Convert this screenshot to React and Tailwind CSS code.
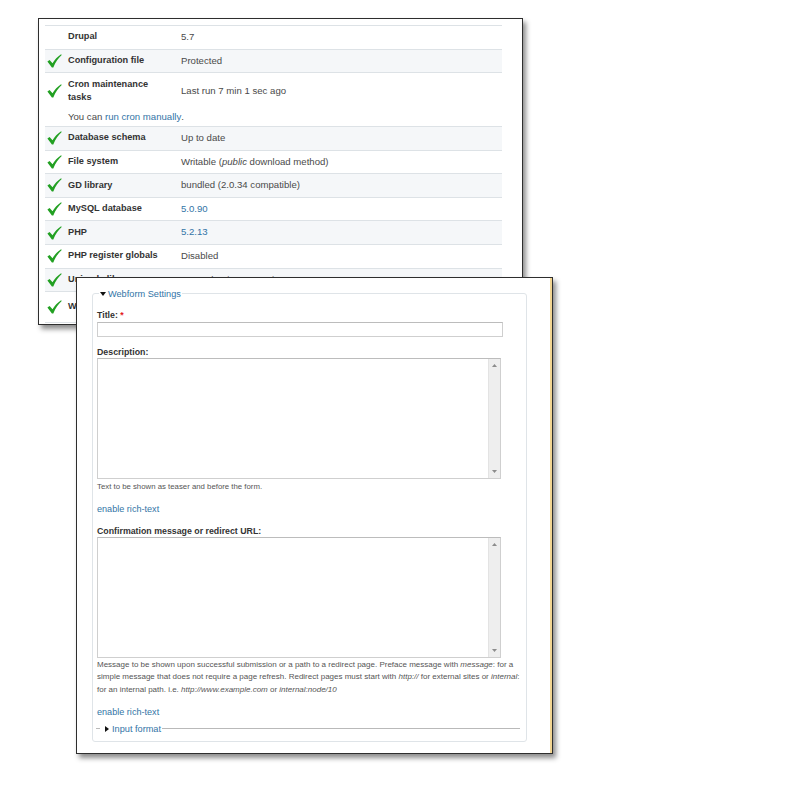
import React from "react";

const LINK = "text-[#3274a6]";

function Check() {
  return (
    <svg width="15" height="14" viewBox="0 0 15 14" className="block">
      <path
        d="M0.4 7.6 L2.6 5.9 L5.5 9.3 C7.6 5.8 10.5 2.6 14.1 0.3 L14.7 1 C11.4 4 8.6 7.9 6.3 13.4 L4.9 13.5 Z"
        fill="#22a022"
      />
    </svg>
  );
}

function Row({ label, children, alt, check = true, height }) {
  return (
    <div
      className={`flex items-center border-b border-[#dde2e6] ${height} ${
        alt ? "bg-[#f5f7f9]" : "bg-white"
      }`}
    >
      <div className="w-[23px] pl-[2px]">{check && <Check />}</div>
      <div className="w-[113px] text-[9.2px] font-bold text-[#333]">{label}</div>
      <div className="text-[9.6px] text-[#4a4a4a] whitespace-nowrap">{children}</div>
    </div>
  );
}

function StatusPanel() {
  return (
    <div className="absolute left-[38px] top-[18px] w-[485px] h-[307px] bg-white border border-[#2e2e2e] shadow-[3px_4px_5px_rgba(0,0,0,0.45)] pl-[6px] pt-[6px] pr-[20px] overflow-hidden">
      <div className="border-t border-[#dde2e6]">
        <Row label="Drupal" check={false} height="h-[23.5px]">5.7</Row>
        <Row label="Configuration file" alt height="h-[23.5px]">Protected</Row>

        {/* cron row carries an extra hint line under it */}
        <div className="h-[54px] border-b border-[#dde2e6] bg-white flex flex-col">
          <div className="h-[36px] flex items-center">
            <div className="w-[23px] pl-[2px]"><Check /></div>
            <div className="w-[113px] text-[9.2px] font-bold text-[#333] leading-[13.3px]">
              Cron maintenance
              <br />
              tasks
            </div>
            <div className="text-[9.6px] text-[#4a4a4a]">Last run 7 min 1 sec ago</div>
          </div>
          <div className="h-[17px] flex items-center pl-[23px] text-[9.6px] text-[#4a4a4a]">
            You can&nbsp;<span className={LINK}>run cron manually</span>.
          </div>
        </div>

        <Row label="Database schema" alt height="h-[23.6px]">Up to date</Row>
        <Row label="File system" height="h-[23.6px]">
          Writable (<em>public</em> download method)
        </Row>
        <Row label="GD library" alt height="h-[23.6px]">bundled (2.0.34 compatible)</Row>
        <Row label="MySQL database" height="h-[23.6px]">
          <span className={LINK}>5.0.90</span>
        </Row>
        <Row label="PHP" alt height="h-[23.6px]">
          <span className={LINK}>5.2.13</span>
        </Row>
        <Row label="PHP register globals" height="h-[23.6px]">Disabled</Row>
        <Row label="Unicode library" alt height="h-[23.6px]">PHP Mbstring Extension</Row>
        <Row label="Web server" height="h-[31px]">Apache/2.2.3 (CentOS)</Row>
      </div>
    </div>
  );
}

function TextArea() {
  return (
    <div className="w-[404px] h-[121px] border border-[#cfcfcf] border-t-[#bcbcbc] flex justify-end">
      <div className="w-[12px] h-full bg-[#eeeeee] border-l border-[#e3e3e3] flex flex-col justify-between items-center py-[5px]">
        <svg width="5" height="3" viewBox="0 0 5 3" className="block">
          <polygon points="0,3 5,3 2.5,0" fill="#8c8c8c" />
        </svg>
        <svg width="5" height="3" viewBox="0 0 5 3" className="block">
          <polygon points="0,0 5,0 2.5,3" fill="#8c8c8c" />
        </svg>
      </div>
    </div>
  );
}

function Label({ children }) {
  return <div className="h-[12px] leading-[12px] text-[8.8px] font-bold text-[#333]">{children}</div>;
}

function WebformPanel() {
  return (
    <div className="absolute left-[76px] top-[277px] w-[477px] h-[477px] bg-white border border-[#2e2e2e] shadow-[inset_-2px_0_0_#f2d592,3px_4px_5px_rgba(0,0,0,0.45)] pl-[15px] pt-[10px]">
      <fieldset className="w-[435px] border border-[#dfe4e8] rounded-[3px] pl-[4px] pb-[7px]">
        <legend className={`ml-[2px] px-[1px] leading-[10px] text-[9.2px] ${LINK}`}>
          <span className="inline-flex items-center gap-[2px]">
            <svg width="6" height="4" viewBox="0 0 6 4" className="block">
              <polygon points="0,0 6,0 3,4" fill="#111" />
            </svg>
            Webform Settings
          </span>
        </legend>

        <div className="mt-[10px]">
          <Label>
            Title: <span className="text-[#e3191c]">*</span>
          </Label>
        </div>
        <div className="mt-[1px] w-[406px] h-[15px] border border-[#cfcfcf] border-t-[#bcbcbc]" />

        <div className="mt-[9px]">
          <Label>Description:</Label>
        </div>
        <TextArea />
        <div className="mt-[3px] leading-[10px] text-[7.8px] text-[#555]">
          Text to be shown as teaser and before the form.
        </div>
        <div className={`mt-[11px] leading-[12px] text-[9.1px] ${LINK}`}>enable rich-text</div>

        <div className="mt-[10px]">
          <Label>Confirmation message or redirect URL:</Label>
        </div>
        <TextArea />
        <div className="mt-[1px] leading-[12.3px] text-[8px] text-[#555] whitespace-nowrap">
          Message to be shown upon successful submission or a path to a redirect page. Preface message with{" "}
          <em>message</em>: for a
          <br />
          simple message that does not require a page refresh. Redirect pages must start with <em>http://</em> for
          external sites or <em>internal</em>:
          <br />
          for an internal path. i.e. <em>http://www.example.com</em> or <em>internal:node/10</em>
        </div>
        <div className={`mt-[10px] leading-[12px] text-[9.1px] ${LINK}`}>enable rich-text</div>

        <fieldset className="mt-[6px] -ml-[1px] w-[424px] border-t border-[#b9b9b9]">
          <legend className={`ml-[4px] pl-[5px] pr-[1px] leading-[10px] text-[9.2px] ${LINK}`}>
            <span className="inline-flex items-center gap-[3px]">
              <svg width="4" height="6" viewBox="0 0 4 6" className="block">
                <polygon points="0,0 4,3 0,6" fill="#111" />
              </svg>
              Input format
            </span>
          </legend>
        </fieldset>
      </fieldset>
    </div>
  );
}

export default function App() {
  return (
    <div className="relative w-[800px] h-[800px] bg-white font-['Liberation_Sans',Arial,sans-serif] overflow-hidden">
      <StatusPanel />
      <WebformPanel />
    </div>
  );
}
